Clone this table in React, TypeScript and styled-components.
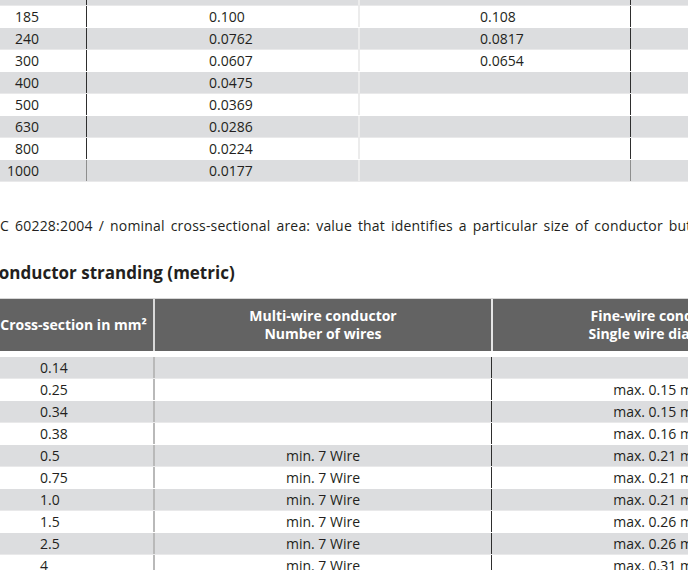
import styled, { createGlobalStyle } from 'styled-components';

const GlobalStyle = createGlobalStyle`
  html, body {
    margin: 0;
    padding: 0;
    background: #ffffff;
  }
`;

const resistance = [
  { size: '150', plain: '0.126', tinned: '0.132' },
  { size: '185', plain: '0.100', tinned: '0.108' },
  { size: '240', plain: '0.0762', tinned: '0.0817' },
  { size: '300', plain: '0.0607', tinned: '0.0654' },
  { size: '400', plain: '0.0475', tinned: '' },
  { size: '500', plain: '0.0369', tinned: '' },
  { size: '630', plain: '0.0286', tinned: '' },
  { size: '800', plain: '0.0224', tinned: '' },
  { size: '1000', plain: '0.0177', tinned: '' },
];

const stranding = [
  { size: '0.14', multi: '', fine: '' },
  { size: '0.25', multi: '', fine: 'max. 0.15 mm' },
  { size: '0.34', multi: '', fine: 'max. 0.15 mm' },
  { size: '0.38', multi: '', fine: 'max. 0.16 mm' },
  { size: '0.5', multi: 'min. 7 Wire', fine: 'max. 0.21 mm' },
  { size: '0.75', multi: 'min. 7 Wire', fine: 'max. 0.21 mm' },
  { size: '1.0', multi: 'min. 7 Wire', fine: 'max. 0.21 mm' },
  { size: '1.5', multi: 'min. 7 Wire', fine: 'max. 0.26 mm' },
  { size: '2.5', multi: 'min. 7 Wire', fine: 'max. 0.26 mm' },
  { size: '4', multi: 'min. 7 Wire', fine: 'max. 0.31 mm' },
  { size: '6', multi: 'min. 7 Wire', fine: 'max. 0.31 mm' },
];

const App = () => {
  return (
    <>
      <GlobalStyle />
      <Viewport>
        <Sheet>
          <Table>
            {resistance.map((row, i) => {
              const last = i === resistance.length - 1;
              return (
                <Row key={row.size} $shade={i % 2 === 0}>
                  <SizeCell $last={last}>{row.size}</SizeCell>
                  <ValueCell>{row.plain}</ValueCell>
                  <TinnedCell $last={last}>{row.tinned}</TinnedCell>
                  <FillCell />
                </Row>
              );
            })}
          </Table>

          <Note>
            IEC 60228:2004 / nominal cross-sectional area: value that identifies a particular size of conductor but is not subject to direct measurement
          </Note>

          <Heading>Conductor stranding (metric)</Heading>

          <Table>
            <HeadRow>
              <HeadFirst>Cross-section in mm²</HeadFirst>
              <HeadMiddle>
                Multi-wire conductor
                <br />
                Number of wires
              </HeadMiddle>
              <HeadLast>
                Fine-wire conductor
                <br />
                Single wire diameter
              </HeadLast>
            </HeadRow>
            {stranding.map((row, i) => (
              <Row key={row.size} $shade={i % 2 === 0}>
                <StrandSize>{row.size}</StrandSize>
                <StrandMulti>{row.multi}</StrandMulti>
                <StrandFine>{row.fine}</StrandFine>
              </Row>
            ))}
          </Table>
        </Sheet>
      </Viewport>
    </>
  );
};

export default App;

const Viewport = styled.div`
  width: 688px;
  height: 570px;
  overflow: hidden;
`;

const Sheet = styled.div`
  margin: -16px 0 0 -40px;
  width: 1100px;
  font-family: "Open Sans", "Liberation Sans", Arial, sans-serif;
  font-size: 14px;
  color: #231f20;
`;

const Table = styled.div`
  display: flex;
  flex-direction: column;
`;

const Row = styled.div<{ $shade: boolean }>`
  display: flex;
  height: 22px;
  box-sizing: border-box;
  line-height: 22px;
  background: ${p => (p.$shade ? '#dcdddf' : '#ffffff')};
  border-bottom: 1px solid ${p => (p.$shade ? '#e9e9ea' : '#ffffff')};
`;

const Cell = styled.div`
  box-sizing: border-box;
  flex: none;
  white-space: nowrap;
`;

const SizeCell = styled(Cell)<{ $last: boolean }>`
  width: 127px;
  padding-right: 47px;
  text-align: right;
  border-right: 1px solid ${p => (p.$last ? '#8e8e8e' : '#2e2e2e')};
`;

const ValueCell = styled(Cell)`
  width: 273px;
  padding-left: 122px;
  border-right: 2px solid #ececec;
`;

const TinnedCell = styled(Cell)<{ $last: boolean }>`
  width: 271px;
  padding-left: 120px;
  border-right: 1px solid ${p => (p.$last ? '#8e8e8e' : '#2e2e2e')};
`;

const FillCell = styled(Cell)`
  flex: 1;
`;

const Note = styled.p`
  margin: 34px 0 0 28px;
  line-height: 20px;
  white-space: nowrap;
  letter-spacing: 0.2px;
  word-spacing: 2.1px;
`;

const Heading = styled.h2`
  margin: 25px 0 13px 28px;
  font-size: 17px;
  font-weight: 700;
  line-height: 24px;
`;

const HeadRow = styled.div`
  display: flex;
  height: 53px;
  box-sizing: border-box;
  margin-bottom: 6px;
  border-top: 1px solid #d6d6d6;
  background: #636363;
  color: #ffffff;
  font-weight: 700;
  line-height: 18px;
`;

const HeadCell = styled(Cell)`
  display: flex;
  align-items: center;
  justify-content: center;
  text-align: center;
`;

const HeadFirst = styled(HeadCell)`
  width: 195px;
  padding-left: 34px;
  border-right: 2px solid #d9d9d9;
`;

const HeadMiddle = styled(HeadCell)`
  width: 338px;
  border-right: 2px solid #e6e6e6;
`;

const HeadLast = styled(HeadCell)`
  width: 335px;
`;

const StrandSize = styled(Cell)`
  width: 195px;
  padding-left: 80px;
  border-right: 2px solid #b9b9b9;
`;

const StrandMulti = styled(Cell)`
  width: 337px;
  text-align: center;
  border-right: 1px solid #2e2e2e;
`;

const StrandFine = styled(Cell)`
  width: 335px;
  text-align: center;
`;
